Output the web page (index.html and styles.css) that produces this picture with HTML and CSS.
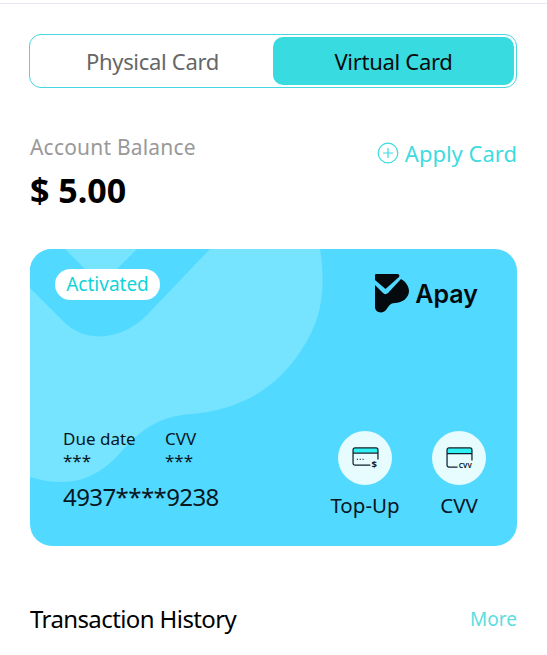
FILE: index.html
```html
<!DOCTYPE html>
<html lang="en">
<head>
<meta charset="utf-8">
<title>Cards</title>
<link rel="stylesheet" href="styles.css">
</head>
<body>
<div class="topline"></div>
<main class="page">
  <div class="tabs">
    <div class="tab">Physical Card</div>
    <div class="tab tab-active">Virtual Card</div>
  </div>

  <section class="balance">
    <div>
      <div class="balance-label">Account Balance</div>
      <div class="balance-value">$ 5.00</div>
    </div>
    <a class="apply">
      <svg class="apply-icon" viewBox="0 0 22 22" aria-hidden="true"><circle cx="11" cy="11" r="9.8" fill="none" stroke="#3adbe0" stroke-width="1.2"/><path d="M11 6v10M6 11h10" stroke="#3adbe0" stroke-width="1.2" fill="none"/></svg>
      <span>Apply Card</span>
    </a>
  </section>

  <section class="card">
    <svg class="card-bg" viewBox="0 0 487 297" aria-hidden="true">
      <path fill="#76e4ff" d="M0 0H290C296 40 292 70 272 100C246 142 205 162 160 165C125 168 108 184 90 204C74 222 55 233 32 233C20 233 10 231 0 228Z"/>
      <path fill="#52d9ff" d="M0 0H35L71 36L107 0H180L117 66C90 93 55 93 35 74L0 39Z"/>
    </svg>
    <div class="card-top">
      <span class="badge">Activated</span>
      <div class="logo">
        <svg class="logo-mark" viewBox="0 0 36 40" aria-hidden="true">
          <path fill="#050a0f" d="M2 0H23C25 0 26 1 25 3L11.500 15L1 6V2C1 1 1 0 2 0Z"/>
          <path fill="#050a0f" d="M1 11L9 19C10.500 20.500 12.500 20.500 14 19L27 5C31 7 35 12 35 17C35 24 28 29 21 29C16 29 15 32 12 36C9 40 1 39 1 33Z"/>
        </svg>
        <span class="logo-text">Apay</span>
      </div>
    </div>
    <div class="card-bottom">
      <div class="card-info">
        <div class="info-row">
          <div class="info-col"><div class="info-label">Due date</div><div class="info-mask">***</div></div>
          <div class="info-col"><div class="info-label">CVV</div><div class="info-mask">***</div></div>
        </div>
        <div class="card-number">4937****9238</div>
      </div>
      <div class="actions">
        <div class="action">
          <div class="action-circle">
            <svg class="action-icon" viewBox="0 0 28 24" aria-hidden="true">
              <path fill="#2ff0f2" d="M1 6V3C1 1.500 2 1 3 1H25C26 1 27 1.500 27 3V6Z"/>
              <path fill="none" stroke="#10202a" stroke-width="1.300" d="M19 19H3C2 19 1 18 1 17V3C1 1.500 2 1 3 1H25C26 1 27 1.500 27 3V13M1 6.500H27"/>
              <path fill="none" stroke="#10202a" stroke-width="1.300" d="M5 13h1M8 13h1M11 13h1"/>
              <text class="icon-dollar" x="23" y="22">$</text>
            </svg>
          </div>
          <div class="action-label">Top-Up</div>
        </div>
        <div class="action">
          <div class="action-circle">
            <svg class="action-icon" viewBox="0 0 28 24" aria-hidden="true">
              <path fill="#2ff0f2" d="M1 7V3C1 1.500 2 1 3 1H25C26 1 27 1.500 27 3V7Z"/>
              <path fill="none" stroke="#10202a" stroke-width="1.300" d="M12 21H3C2 21 1 20 1 19V3C1 1.500 2 1 3 1H25C26 1 27 1.500 27 3V14M1 7H27"/>
              <text class="icon-cvv" x="20" y="21.500">CVV</text>
            </svg>
          </div>
          <div class="action-label">CVV</div>
        </div>
      </div>
    </div>
  </section>

  <section class="history">
    <h2 class="history-title">Transaction History</h2>
    <a class="more">More</a>
  </section>
</main>
</body>
</html>
```
FILE: styles.css
```css
* { box-sizing: border-box; }
html, body { margin: 0; padding: 0; background: #fff; }
body { width: 547px; height: 655px; overflow: hidden; font-family: "Noto Sans", "Open Sans", sans-serif; color: #000; }

.topline { height: 4px; border-bottom: 1px solid #e8e8f2; }
.page { padding: 30px 30px 0; }

.tabs { display: grid; grid-template-columns: 1fr 1fr; margin-left: -1px; height: 54px; padding: 2px; border: 1px solid #45d6de; border-radius: 12px; }
.tab { display: flex; align-items: center; justify-content: center; font-size: 22px; letter-spacing: -0.3px; color: #666; border-radius: 10px; }
.tab-active { background: #38dbe0; color: #0a0a0a; }

.balance { display: flex; justify-content: space-between; align-items: flex-start; margin-top: 43px; }
.balance-label { font-size: 21px; letter-spacing: 0.2px; line-height: 32px; color: #999; }
.balance-value { font-size: 34px; line-height: 44px; font-weight: 700; margin-top: 5px; }
.apply { display: flex; align-items: center; gap: 6px; margin-top: 6px; font-size: 22px; line-height: 32px; color: #3fdbe0; }
.apply-icon { width: 22px; height: 22px; }

.card { position: relative; height: 297px; margin-top: 37px; border-radius: 22px; background: #52d9ff; overflow: hidden; display: flex; flex-direction: column; justify-content: space-between; }
.card-bg { position: absolute; inset: 0; width: 100%; height: 100%; }
.card-top, .card-bottom { position: relative; display: flex; justify-content: space-between; }
.card-top { padding: 20px 39px 0 25px; align-items: flex-start; }
.badge { display: block; width: 105px; height: 31px; line-height: 30px; text-align: center; border-radius: 16px; background: #fff; color: #10d4d8; font-size: 19px; }
.logo { display: flex; align-items: center; gap: 5px; margin-top: 5px; }
.logo-mark { width: 36px; height: 40px; }
.logo-text { font-family: Inter, sans-serif; font-weight: 600; font-size: 25px; line-height: 40px; color: #050a0f; }

.card-bottom { padding: 0 23px 24px 33px; align-items: flex-end; }
.card-info { margin-bottom: 8px; }
.info-row { display: flex; }
.info-col { width: 102px; }
.info-label { font-size: 17px; line-height: 23px; color: #08161f; }
.info-mask { font-size: 17px; line-height: 22px; color: #08161f; }
.card-number { font-size: 24px; letter-spacing: -0.58px; line-height: 34px; margin-top: 8px; color: #08161f; }
.actions { display: flex; gap: 24px; align-items: flex-end; margin-bottom: 1px; }
.action { display: flex; flex-direction: column; align-items: center; width: 70px; }
.action-circle { width: 54px; height: 54px; border-radius: 50%; background: #e6fcff; display: flex; align-items: center; justify-content: center; }
.action-icon { width: 27px; height: 23px; overflow: visible; }
.action-label { font-size: 20.5px; line-height: 32px; margin-top: 4px; color: #08161f; white-space: nowrap; }
.icon-dollar { font-size: 10px; font-weight: 700; fill: #10202a; text-anchor: middle; }
.icon-cvv { font-size: 7px; font-weight: 700; fill: #10202a; text-anchor: middle; }

.history { display: flex; justify-content: space-between; align-items: center; margin-top: 54px; }
.history-title { margin: 0; font-size: 24px; letter-spacing: -0.6px; line-height: 38px; font-weight: 400; }
.more { font-size: 19px; color: #5cdde0; }
```
